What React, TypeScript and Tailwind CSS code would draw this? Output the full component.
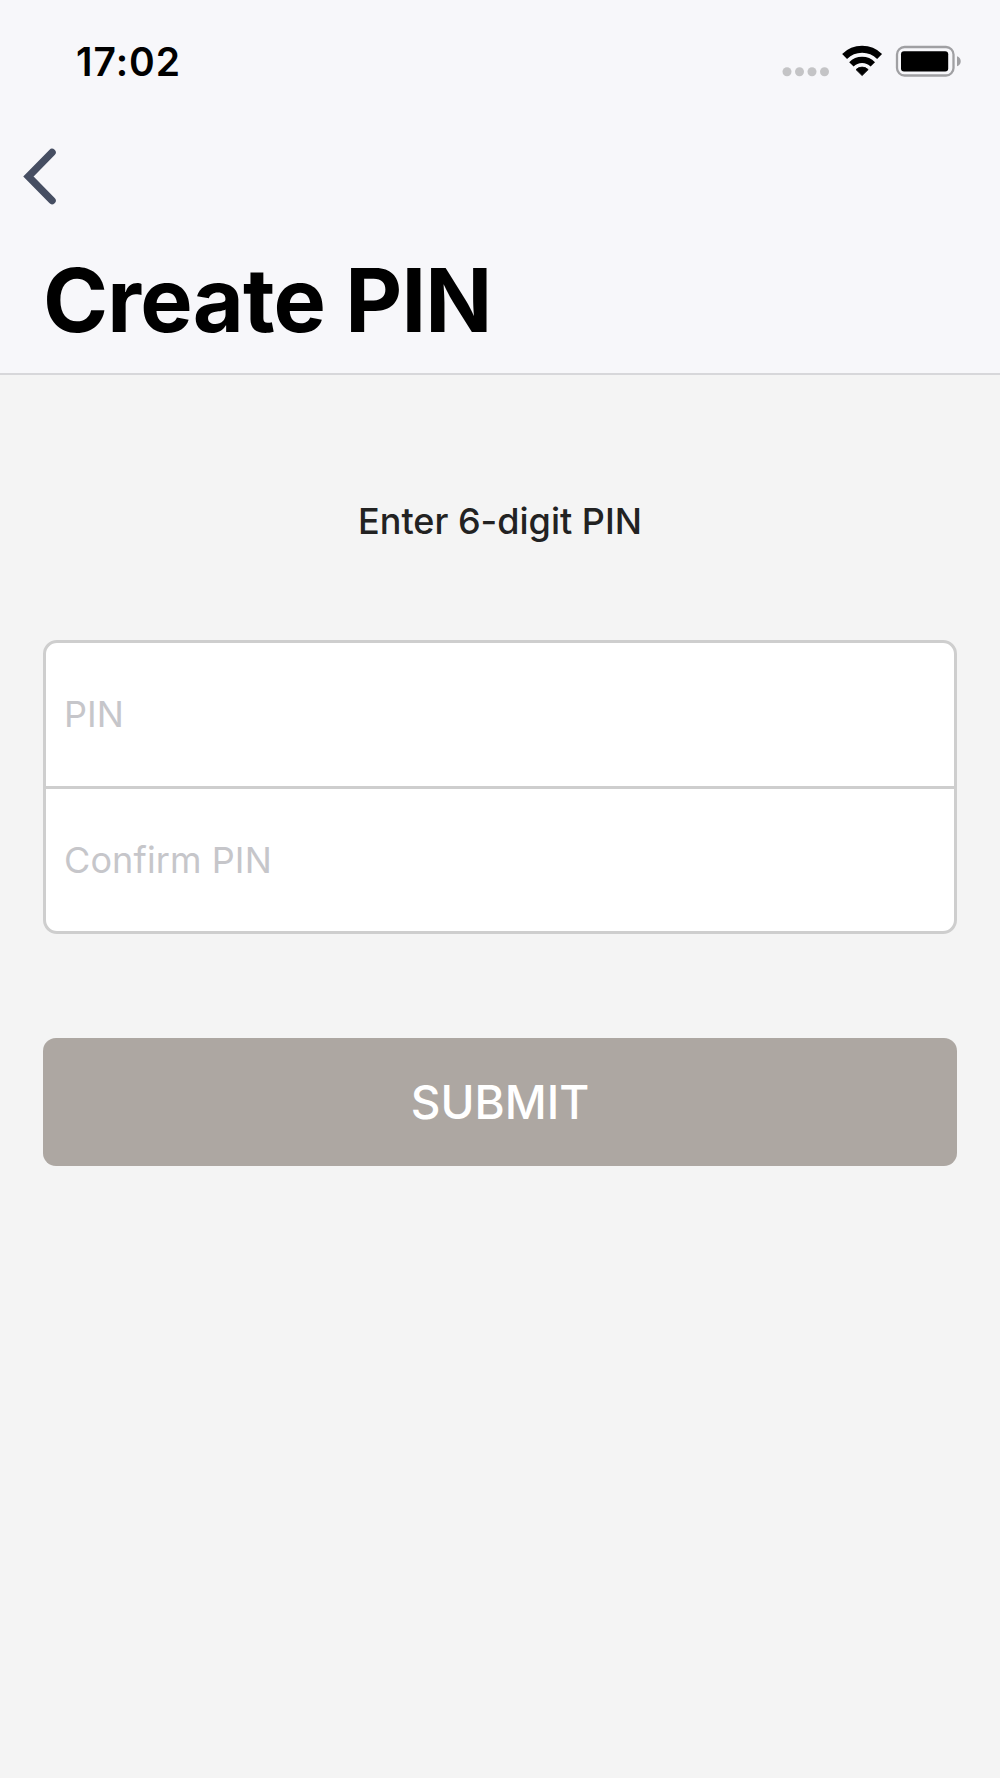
function StatusIcons() {
  return (
    <svg className="h-[60px] w-[200px]" viewBox="0 0 200 60" fill="none" aria-hidden="true">
      <g fill="#c4c4c6">
        <circle cx="17" cy="41.7" r="4.5" />
        <circle cx="29.5" cy="41.7" r="4.5" />
        <circle cx="42" cy="41.7" r="4.5" />
        <circle cx="54.5" cy="41.7" r="4.5" />
      </g>
      <g stroke="#000">
        <path d="M74.600 26.400a25 25 0 0 1 35 0" strokeWidth="7" />
        <path d="M81.400 34.300a15 15 0 0 1 21.400 0" strokeWidth="6.200" />
      </g>
      <path d="M86 39.600a8.700 8.700 0 0 1 12.200 0L92.100 45.600Z" fill="#000" stroke="#000" strokeWidth="0.8" strokeLinejoin="round" />
      <rect x="127" y="17" width="56.5" height="28.5" rx="7.5" stroke="#a0a0a3" strokeWidth="2.3" />
      <rect x="131" y="21.300" width="47.200" height="20.300" rx="3" fill="#000" />
      <path d="M187 26.200c5 1.500 5 8.600 0 10.100Z" fill="#a0a0a3" />
    </svg>
  );
}

export default function App() {
  return (
    <div className="flex h-[1778px] w-[1000px] flex-col overflow-hidden bg-[#f4f4f4] font-['Inter',sans-serif] whitespace-nowrap">
      <header className="h-[375px] border-b-2 border-[#d7d7da] bg-[#f7f7fa] text-black">
        <div className="flex items-start justify-between pt-[30px] pr-[30px] pl-[76px]">
          <time className="pt-[8px] text-[39px] leading-[48px] font-semibold tracking-[1px]">17:02</time>
          <StatusIcons />
        </div>
        <button className="mt-[40px] block h-[90px] w-[100px]" aria-label="Back">
          <svg className="h-[90px] w-[100px]" viewBox="0 0 100 90" fill="none">
            <path d="M52 22.500L28.500 46.500L52 70.500" stroke="#464e62" strokeWidth="7.500" strokeLinecap="round" strokeLinejoin="miter" />
          </svg>
        </button>
        <h1 className="mt-[30px] ml-[43px] text-[88px] leading-[100px] font-bold tracking-[-0.8px]">Create PIN</h1>
      </header>
      <main className="flex flex-col px-[43px]">
        <p className="mt-[122px] text-center text-[36px] leading-[48px] font-medium tracking-[0px] text-[#222]">Enter 6-digit PIN</p>
        <form className="mt-[95px] flex flex-col">
          <div className="h-[294px] overflow-hidden rounded-[14px] border-[3px] border-[#cecece] bg-white">
            <input className="block h-[143px] w-full px-[18px] pb-[2px] text-[36px] placeholder:text-[#c6c6ca]" placeholder="PIN" />
            <div className="h-[3px] bg-[#cecece]" />
            <input className="block h-[143px] w-full px-[18px] pb-[2px] text-[36px] tracking-[0.1px] placeholder:text-[#c6c6ca]" placeholder="Confirm PIN" />
          </div>
          <button type="button" className="mt-[104px] h-[128px] rounded-[13px] bg-[#ada7a2] text-[46px] font-[450] text-white">SUBMIT</button>
        </form>
      </main>
    </div>
  );
}
